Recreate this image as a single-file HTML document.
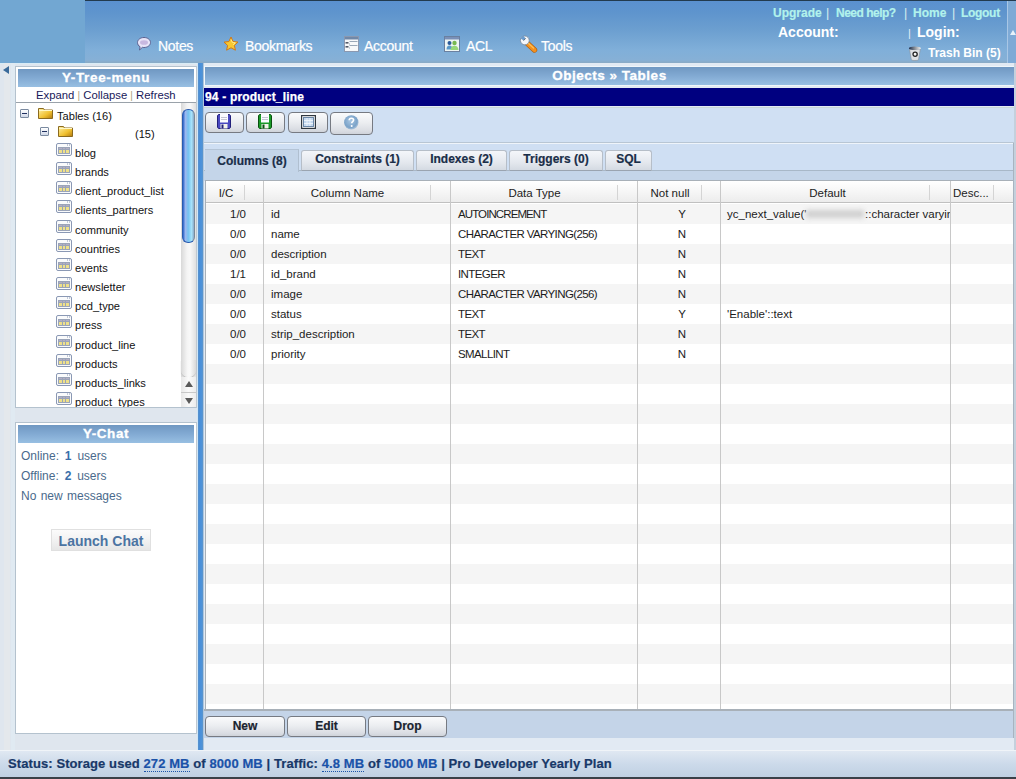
<!DOCTYPE html>
<html><head><meta charset="utf-8">
<style>
*{box-sizing:border-box}
html,body{margin:0;padding:0}
body{width:1016px;height:779px;overflow:hidden;position:relative;background:#dfe6ee;font-family:"Liberation Sans",sans-serif;}
.a{position:absolute}
.nw{white-space:nowrap}
/* header */
#hdr{left:0;top:0;width:1016px;height:63px;background:linear-gradient(#5a90cf 0px,#5e94cd 12px,#6c9fd0 30px,#80afd9 50px,#86b0d6 60px,#8aaac4 63px)}
#logo{left:0;top:0;width:85px;height:63px;background:#72a7d2}
#topline{left:85px;top:0;width:931px;height:1px;background:#223a4e}
#rstrip{left:1007px;top:1px;width:9px;height:62px;background:#7eaad6;border-left:1px solid #a9c7e6}
.nav{color:#fff;font-size:14px;top:38px;line-height:16px;letter-spacing:-.3px;-webkit-text-stroke:.2px #fff}
.hl{color:#b2f2ec;font-weight:bold;font-size:12px;top:7px;line-height:13px;-webkit-text-stroke:.2px #b2f2ec}
.hs{color:#d8f0f0;font-size:12.5px;top:6px;line-height:14px}
.tb{background:linear-gradient(#7098c2,#82aad3 50%,#98bfe2)}
.tt{color:#fff;font-weight:bold;text-align:center;-webkit-text-stroke:.3px #fff}
</style></head><body>

<!-- HEADER -->
<div id="hdr" class="a"></div>
<div id="logo" class="a"></div>
<div id="topline" class="a"></div>
<div id="rstrip" class="a"></div>
<div class="a" style="left:1010px;top:30px;width:0;height:0;border-left:3px solid transparent;border-right:3px solid transparent;border-bottom:5px solid #e6f2fa"></div>

<!-- nav icons + text -->
<svg class="a" style="left:136px;top:36px" width="16" height="16" viewBox="0 0 16 16">
 <path d="M8 1.5c3.6 0 6.5 2.2 6.5 5s-2.9 5-6.5 5c-.6 0-1.1 0-1.6-.2L3.5 14l.6-3.2C2.5 9.9 1.5 8.3 1.5 6.5c0-2.8 2.9-5 6.5-5z" fill="#e8e4f8" stroke="#5a6090" stroke-width="1"/>
 <ellipse cx="8" cy="6.5" rx="4" ry="2.3" fill="#c8b8e0"/>
</svg>
<div class="a nav nw" style="left:158px">Notes</div>
<svg class="a" style="left:223px;top:36px" width="16" height="16" viewBox="0 0 16 16">
 <path d="M8 1l2.1 4.5 4.9.6-3.6 3.3 1 4.8L8 11.8 3.6 14.2l1-4.8L1 6.1l4.9-.6z" fill="#f8c830" stroke="#d07818" stroke-width="1"/>
 <path d="M8 3.5l1.3 2.9 3 .4-2.2 2" fill="none" stroke="#fff4a0" stroke-width=".8"/>
</svg>
<div class="a nav nw" style="left:245px">Bookmarks</div>
<svg class="a" style="left:344px;top:36px" width="15" height="16" viewBox="0 0 15 16">
 <rect x=".5" y=".5" width="14" height="15" fill="#f6f8fa" stroke="#8a98b0"/>
 <rect x="1" y="1" width="13" height="2.5" fill="#7088a8"/>
 <rect x="1.5" y="6" width="3" height="1.6" fill="#505868"/><path d="M5.5 5.5h8M5.5 7.5v1" stroke="#9aa8b8" stroke-width="1"/>
 <rect x="1.5" y="10" width="3" height="1.6" fill="#505868"/><path d="M5.5 9.5h8M5.5 11.5v1" stroke="#9aa8b8" stroke-width="1"/>
</svg>
<div class="a nav nw" style="left:364px">Account</div>
<svg class="a" style="left:444px;top:36px" width="16" height="16" viewBox="0 0 16 16">
 <rect x=".5" y=".5" width="15" height="15" fill="#eef6f4" stroke="#6a80a0"/>
 <rect x="1" y="1" width="14" height="2.5" fill="#7a90b8"/>
 <circle cx="5.5" cy="7" r="2" fill="#2a5a9a"/><path d="M2.5 13.5c0-2.5 1.2-4 3-4s3 1.5 3 4z" fill="#5a98c8"/>
 <circle cx="10.5" cy="7" r="2.2" fill="#78b850"/><path d="M6.5 14c0-2.8 1.8-4.3 4-4.3s4 1.5 4 4.3z" fill="#98d878"/>
</svg>
<div class="a nav nw" style="left:466px">ACL</div>
<svg class="a" style="left:519px;top:34px" width="19" height="19" viewBox="0 0 19 19">
 <path d="M8.5 9.5l7 6.5" stroke="#b06010" stroke-width="5.4" stroke-linecap="round"/>
 <path d="M8.5 9.5l7 6.5" stroke="#f4901e" stroke-width="4.2" stroke-linecap="round"/>
 <path d="M9 9l5.5 5" stroke="#ffc050" stroke-width="1.3" stroke-linecap="round"/>
 <circle cx="5.8" cy="6.4" r="4.4" fill="#f4f6fa" stroke="#7a8696" stroke-width=".8"/>
 <path d="M1.6 4.6L4.6 6.6 6.6 4.4 4.4 1.8z" fill="#6a9ccf"/>
 <path d="M4.6 6.6L6.6 4.4" stroke="#5a6470" stroke-width=".9"/>
</svg>
<div class="a nav nw" style="left:541px">Tools</div>

<!-- top right links -->
<div class="a hl nw" style="left:773px">Upgrade</div>
<div class="a hs" style="left:826px">|</div>
<div class="a hl nw" style="left:836px;letter-spacing:-.5px">Need help?</div>
<div class="a hs" style="left:904px">|</div>
<div class="a hl nw" style="left:913px">Home</div>
<div class="a hs" style="left:952px">|</div>
<div class="a hl nw" style="left:961px;letter-spacing:-.3px">Logout</div>
<div class="a nw" style="left:778px;top:24px;color:#fff;font-weight:bold;font-size:14px;line-height:16px">Account:</div>
<div class="a" style="left:908px;top:27px;color:#e0f0f8;font-size:11px;line-height:12px">|</div>
<div class="a nw" style="left:917px;top:24px;color:#fff;font-weight:bold;font-size:14px;line-height:16px">Login:</div>
<svg class="a" style="left:908px;top:46px" width="14" height="15" viewBox="0 0 14 15">
 <defs><linearGradient id="trg" x1="0" x2="1"><stop offset="0" stop-color="#1a2a48"/><stop offset=".5" stop-color="#8a9098"/><stop offset="1" stop-color="#f4f4f4"/></linearGradient></defs>
 <path d="M1.5 3.2L3.3 13.6c.1.5 1.3.9 3.6.9s3.5-.4 3.6-.9L12.3 3.2z" fill="#dde0e4" stroke="#8a9098" stroke-width=".6"/>
 <ellipse cx="6.9" cy="2.3" rx="6" ry="1.8" fill="url(#trg)"/>
 <circle cx="7.1" cy="8.3" r="2.1" fill="#f4f4f4" stroke="#202020" stroke-width="1.3"/>
</svg>
<div class="a nw" style="left:928px;top:47px;color:#fff;font-weight:bold;font-size:12px;line-height:13px">Trash Bin (5)</div>



<!-- SIDEBAR -->
<div class="a" style="left:0;top:63px;width:1016px;height:1px;background:#d8ecf6"></div>
<div class="a" style="left:4px;top:63px;width:6px;height:688px;background:#e4e8ec"></div>
<div class="a" style="left:11px;top:63px;width:4px;height:688px;background:#e0eaf2"></div>
<div class="a" style="left:3px;top:66px;width:0;height:0;border-top:4px solid transparent;border-bottom:4px solid transparent;border-right:6px solid #3a6a9a"></div>
<div class="a" style="left:15px;top:66px;width:182px;height:342px;background:#fff;border:1px solid #b4c2ce;border-right-color:#c0c8d0"></div>
<div class="a tb" style="left:18px;top:69px;width:176px;height:18px"></div>
<div class="a tt nw" style="left:18px;top:71px;width:176px;font-size:13.5px;line-height:14px;letter-spacing:.65px">Y-Tree-menu</div>
<div class="a nw" style="left:36px;top:89px;font-size:11.3px;line-height:13px;color:#18185a">Expand <span style="color:#a8a07a;font-size:10px">|</span> Collapse <span style="color:#a8a07a;font-size:10px">|</span> Refresh</div>
<div class="a" style="left:16px;top:102px;width:180px;height:1px;background:#9aa2aa"></div>
<div class="a" style="left:181px;top:103px;width:15px;height:304px;background:linear-gradient(90deg,#d8d8d8,#f4f4f4 40%,#f8f8f8 60%,#e0e0e0)"></div>
<div class="a" style="left:182px;top:109px;width:13px;height:134px;border-radius:6px;background:linear-gradient(90deg,#2a62c8,#9cb8f0 22%,#74c2f0 48%,#a6e2fa 78%,#8aaac8);border:1px solid #2a5cb0;border-right-color:#7a8a9a"></div>
<div class="a" style="left:181px;top:360px;width:15px;height:17px;border-radius:0 0 7px 7px;background:linear-gradient(90deg,#d8d8d8,#f8f8f8 45%,#fafafa 60%,#d8d8d8);box-shadow:0 1px 1px #b8b8b8"></div>
<div class="a" style="left:181px;top:377px;width:15px;height:30px;background:linear-gradient(90deg,#e8e8e8,#fafafa 50%,#ececec)"></div>
<div class="a" style="left:185px;top:381px;width:0;height:0;border-left:4px solid transparent;border-right:4px solid transparent;border-bottom:6px solid #5a5a5a"></div>
<div class="a" style="left:181px;top:392px;width:15px;height:1px;background:#c8c8c8"></div>
<div class="a" style="left:185px;top:398px;width:0;height:0;border-left:4px solid transparent;border-right:4px solid transparent;border-top:6px solid #5a5a5a"></div>
<div class="a" style="left:16px;top:103px;width:165px;height:304px;overflow:hidden"><svg width="0" height="0" style="position:absolute"><defs><linearGradient id="fg" x1="0" y1="0" x2="1" y2="1"><stop offset="0" stop-color="#fff2a8"/><stop offset=".6" stop-color="#f0c030"/><stop offset="1" stop-color="#b07810"/></linearGradient></defs></svg><div class="a" style="left:4px;top:6px;width:9px;height:9px;border:1px solid #7a8aa0;background:linear-gradient(#fff,#d0d8e8);border-radius:1px"><div class="a" style="left:1px;top:3px;width:5px;height:1px;background:#203060"></div></div><svg class="a" style="left:22px;top:4px" width="15" height="12" viewBox="0 0 15 12"><path d="M.5 1.5h5l1 1.5h8v8.5H.5z" fill="url(#fg)" stroke="#8a6a20" stroke-width="1"/><path d="M1 3.5h13" stroke="#fff8c8" stroke-width="1"/></svg><div class="a nw" style="left:41px;top:7px;font-size:11.1px;line-height:13px;color:#111;">Tables (16)</div><div class="a" style="left:24px;top:24px;width:9px;height:9px;border:1px solid #7a8aa0;background:linear-gradient(#fff,#d0d8e8);border-radius:1px"><div class="a" style="left:1px;top:3px;width:5px;height:1px;background:#203060"></div></div><svg class="a" style="left:42px;top:22px" width="15" height="12" viewBox="0 0 15 12"><path d="M.5 1.5h5l1 1.5h8v8.5H.5z" fill="url(#fg)" stroke="#8a6a20" stroke-width="1"/><path d="M1 3.5h13" stroke="#fff8c8" stroke-width="1"/></svg><div class="a nw" style="left:119px;top:25px;font-size:11.1px;line-height:13px;color:#111;">(15)</div><svg class="a" style="left:40px;top:40px" width="16" height="13" viewBox="0 0 16 13"><rect x=".5" y=".5" width="15" height="12" rx="1.5" fill="#fafbfc" stroke="#8a98b4"/><path d="M11 2h1M13 2h1" stroke="#8a98b4" stroke-width="1"/><rect x="2" y="4" width="12" height="7" fill="#eee08a"/><rect x="2" y="4" width="12" height="2.5" fill="#b4aec4"/><path d="M2 4.5h12M2 6.5h12M2 10.5h12M2.5 4v7M6.5 4v7M9.5 4v7M13.5 4v7" stroke="#9aa4b8" stroke-width="1"/></svg><div class="a nw" style="left:59px;top:44px;font-size:11.1px;line-height:13px;color:#111;">blog</div><svg class="a" style="left:40px;top:59px" width="16" height="13" viewBox="0 0 16 13"><rect x=".5" y=".5" width="15" height="12" rx="1.5" fill="#fafbfc" stroke="#8a98b4"/><path d="M11 2h1M13 2h1" stroke="#8a98b4" stroke-width="1"/><rect x="2" y="4" width="12" height="7" fill="#eee08a"/><rect x="2" y="4" width="12" height="2.5" fill="#b4aec4"/><path d="M2 4.5h12M2 6.5h12M2 10.5h12M2.5 4v7M6.5 4v7M9.5 4v7M13.5 4v7" stroke="#9aa4b8" stroke-width="1"/></svg><div class="a nw" style="left:59px;top:63px;font-size:11.1px;line-height:13px;color:#111;">brands</div><svg class="a" style="left:40px;top:78px" width="16" height="13" viewBox="0 0 16 13"><rect x=".5" y=".5" width="15" height="12" rx="1.5" fill="#fafbfc" stroke="#8a98b4"/><path d="M11 2h1M13 2h1" stroke="#8a98b4" stroke-width="1"/><rect x="2" y="4" width="12" height="7" fill="#eee08a"/><rect x="2" y="4" width="12" height="2.5" fill="#b4aec4"/><path d="M2 4.5h12M2 6.5h12M2 10.5h12M2.5 4v7M6.5 4v7M9.5 4v7M13.5 4v7" stroke="#9aa4b8" stroke-width="1"/></svg><div class="a nw" style="left:59px;top:82px;font-size:11.1px;line-height:13px;color:#111;">client_product_list</div><svg class="a" style="left:40px;top:97px" width="16" height="13" viewBox="0 0 16 13"><rect x=".5" y=".5" width="15" height="12" rx="1.5" fill="#fafbfc" stroke="#8a98b4"/><path d="M11 2h1M13 2h1" stroke="#8a98b4" stroke-width="1"/><rect x="2" y="4" width="12" height="7" fill="#eee08a"/><rect x="2" y="4" width="12" height="2.5" fill="#b4aec4"/><path d="M2 4.5h12M2 6.5h12M2 10.5h12M2.5 4v7M6.5 4v7M9.5 4v7M13.5 4v7" stroke="#9aa4b8" stroke-width="1"/></svg><div class="a nw" style="left:59px;top:101px;font-size:11.1px;line-height:13px;color:#111;">clients_partners</div><svg class="a" style="left:40px;top:117px" width="16" height="13" viewBox="0 0 16 13"><rect x=".5" y=".5" width="15" height="12" rx="1.5" fill="#fafbfc" stroke="#8a98b4"/><path d="M11 2h1M13 2h1" stroke="#8a98b4" stroke-width="1"/><rect x="2" y="4" width="12" height="7" fill="#eee08a"/><rect x="2" y="4" width="12" height="2.5" fill="#b4aec4"/><path d="M2 4.5h12M2 6.5h12M2 10.5h12M2.5 4v7M6.5 4v7M9.5 4v7M13.5 4v7" stroke="#9aa4b8" stroke-width="1"/></svg><div class="a nw" style="left:59px;top:121px;font-size:11.1px;line-height:13px;color:#111;">community</div><svg class="a" style="left:40px;top:136px" width="16" height="13" viewBox="0 0 16 13"><rect x=".5" y=".5" width="15" height="12" rx="1.5" fill="#fafbfc" stroke="#8a98b4"/><path d="M11 2h1M13 2h1" stroke="#8a98b4" stroke-width="1"/><rect x="2" y="4" width="12" height="7" fill="#eee08a"/><rect x="2" y="4" width="12" height="2.5" fill="#b4aec4"/><path d="M2 4.5h12M2 6.5h12M2 10.5h12M2.5 4v7M6.5 4v7M9.5 4v7M13.5 4v7" stroke="#9aa4b8" stroke-width="1"/></svg><div class="a nw" style="left:59px;top:140px;font-size:11.1px;line-height:13px;color:#111;">countries</div><svg class="a" style="left:40px;top:155px" width="16" height="13" viewBox="0 0 16 13"><rect x=".5" y=".5" width="15" height="12" rx="1.5" fill="#fafbfc" stroke="#8a98b4"/><path d="M11 2h1M13 2h1" stroke="#8a98b4" stroke-width="1"/><rect x="2" y="4" width="12" height="7" fill="#eee08a"/><rect x="2" y="4" width="12" height="2.5" fill="#b4aec4"/><path d="M2 4.5h12M2 6.5h12M2 10.5h12M2.5 4v7M6.5 4v7M9.5 4v7M13.5 4v7" stroke="#9aa4b8" stroke-width="1"/></svg><div class="a nw" style="left:59px;top:159px;font-size:11.1px;line-height:13px;color:#111;">events</div><svg class="a" style="left:40px;top:174px" width="16" height="13" viewBox="0 0 16 13"><rect x=".5" y=".5" width="15" height="12" rx="1.5" fill="#fafbfc" stroke="#8a98b4"/><path d="M11 2h1M13 2h1" stroke="#8a98b4" stroke-width="1"/><rect x="2" y="4" width="12" height="7" fill="#eee08a"/><rect x="2" y="4" width="12" height="2.5" fill="#b4aec4"/><path d="M2 4.5h12M2 6.5h12M2 10.5h12M2.5 4v7M6.5 4v7M9.5 4v7M13.5 4v7" stroke="#9aa4b8" stroke-width="1"/></svg><div class="a nw" style="left:59px;top:178px;font-size:11.1px;line-height:13px;color:#111;">newsletter</div><svg class="a" style="left:40px;top:193px" width="16" height="13" viewBox="0 0 16 13"><rect x=".5" y=".5" width="15" height="12" rx="1.5" fill="#fafbfc" stroke="#8a98b4"/><path d="M11 2h1M13 2h1" stroke="#8a98b4" stroke-width="1"/><rect x="2" y="4" width="12" height="7" fill="#eee08a"/><rect x="2" y="4" width="12" height="2.5" fill="#b4aec4"/><path d="M2 4.5h12M2 6.5h12M2 10.5h12M2.5 4v7M6.5 4v7M9.5 4v7M13.5 4v7" stroke="#9aa4b8" stroke-width="1"/></svg><div class="a nw" style="left:59px;top:197px;font-size:11.1px;line-height:13px;color:#111;">pcd_type</div><svg class="a" style="left:40px;top:212px" width="16" height="13" viewBox="0 0 16 13"><rect x=".5" y=".5" width="15" height="12" rx="1.5" fill="#fafbfc" stroke="#8a98b4"/><path d="M11 2h1M13 2h1" stroke="#8a98b4" stroke-width="1"/><rect x="2" y="4" width="12" height="7" fill="#eee08a"/><rect x="2" y="4" width="12" height="2.5" fill="#b4aec4"/><path d="M2 4.5h12M2 6.5h12M2 10.5h12M2.5 4v7M6.5 4v7M9.5 4v7M13.5 4v7" stroke="#9aa4b8" stroke-width="1"/></svg><div class="a nw" style="left:59px;top:216px;font-size:11.1px;line-height:13px;color:#111;">press</div><svg class="a" style="left:40px;top:232px" width="16" height="13" viewBox="0 0 16 13"><rect x=".5" y=".5" width="15" height="12" rx="1.5" fill="#fafbfc" stroke="#8a98b4"/><path d="M11 2h1M13 2h1" stroke="#8a98b4" stroke-width="1"/><rect x="2" y="4" width="12" height="7" fill="#eee08a"/><rect x="2" y="4" width="12" height="2.5" fill="#b4aec4"/><path d="M2 4.5h12M2 6.5h12M2 10.5h12M2.5 4v7M6.5 4v7M9.5 4v7M13.5 4v7" stroke="#9aa4b8" stroke-width="1"/></svg><div class="a nw" style="left:59px;top:236px;font-size:11.1px;line-height:13px;color:#111;">product_line</div><svg class="a" style="left:40px;top:251px" width="16" height="13" viewBox="0 0 16 13"><rect x=".5" y=".5" width="15" height="12" rx="1.5" fill="#fafbfc" stroke="#8a98b4"/><path d="M11 2h1M13 2h1" stroke="#8a98b4" stroke-width="1"/><rect x="2" y="4" width="12" height="7" fill="#eee08a"/><rect x="2" y="4" width="12" height="2.5" fill="#b4aec4"/><path d="M2 4.5h12M2 6.5h12M2 10.5h12M2.5 4v7M6.5 4v7M9.5 4v7M13.5 4v7" stroke="#9aa4b8" stroke-width="1"/></svg><div class="a nw" style="left:59px;top:255px;font-size:11.1px;line-height:13px;color:#111;">products</div><svg class="a" style="left:40px;top:270px" width="16" height="13" viewBox="0 0 16 13"><rect x=".5" y=".5" width="15" height="12" rx="1.5" fill="#fafbfc" stroke="#8a98b4"/><path d="M11 2h1M13 2h1" stroke="#8a98b4" stroke-width="1"/><rect x="2" y="4" width="12" height="7" fill="#eee08a"/><rect x="2" y="4" width="12" height="2.5" fill="#b4aec4"/><path d="M2 4.5h12M2 6.5h12M2 10.5h12M2.5 4v7M6.5 4v7M9.5 4v7M13.5 4v7" stroke="#9aa4b8" stroke-width="1"/></svg><div class="a nw" style="left:59px;top:274px;font-size:11.1px;line-height:13px;color:#111;">products_links</div><svg class="a" style="left:40px;top:289px" width="16" height="13" viewBox="0 0 16 13"><rect x=".5" y=".5" width="15" height="12" rx="1.5" fill="#fafbfc" stroke="#8a98b4"/><path d="M11 2h1M13 2h1" stroke="#8a98b4" stroke-width="1"/><rect x="2" y="4" width="12" height="7" fill="#eee08a"/><rect x="2" y="4" width="12" height="2.5" fill="#b4aec4"/><path d="M2 4.5h12M2 6.5h12M2 10.5h12M2.5 4v7M6.5 4v7M9.5 4v7M13.5 4v7" stroke="#9aa4b8" stroke-width="1"/></svg><div class="a nw" style="left:59px;top:293px;font-size:11.1px;line-height:13px;color:#111;">product_types</div></div>
<div class="a" style="left:15px;top:422px;width:182px;height:312px;background:#fff;border:1px solid #b4c2ce;border-right-color:#c0c8d0"></div>
<div class="a tb" style="left:18px;top:425px;width:176px;height:18px"></div>
<div class="a tt nw" style="left:18px;top:427px;width:176px;font-size:13.5px;line-height:14px;letter-spacing:.55px">Y-Chat</div>
<div class="a nw" style="left:21px;top:449px;font-size:12px;line-height:14px;color:#4a6a8c;word-spacing:2.5px">Online: <b style="color:#3a6eaa">1</b> users</div>
<div class="a nw" style="left:21px;top:469px;font-size:12px;line-height:14px;color:#4a6a8c;word-spacing:2.5px">Offline: <b style="color:#3a6eaa">2</b> users</div>
<div class="a nw" style="left:21px;top:489px;font-size:12px;line-height:14px;color:#4a6a8c;word-spacing:1px">No new messages</div>
<div class="a" style="left:51px;top:529px;width:100px;height:22px;background:linear-gradient(#fbfbfb,#f0f0f0 60%,#e6e6e6);border:1px solid #e0e0e0"></div>
<div class="a nw" style="left:51px;top:533px;width:100px;text-align:center;font-size:14px;line-height:16px;font-weight:bold;color:#4b74a2">Launch Chat</div>
<div class="a" style="left:197px;top:63px;width:1px;height:687px;background:#d0e6f6"></div>
<div class="a" style="left:198px;top:63px;width:5px;height:687px;background:linear-gradient(90deg,#5a92cc,#4a8ed6 30%,#4a92dc 60%,#5a94cc)"></div>
<div class="a" style="left:203px;top:63px;width:1px;height:687px;background:#b0c6dc"></div>
<!-- MAIN -->
<div class="a" style="left:204px;top:63px;width:812px;height:687px;background:#e2eaf3"></div>
<div class="a" style="left:204px;top:66px;width:811px;height:20px;background:#f0f6fa"></div>
<div class="a tb" style="left:205px;top:67px;width:809px;height:18px"></div>
<div class="a tt nw" style="left:205px;top:69px;width:809px;font-size:13.5px;line-height:14px;letter-spacing:.5px">Objects &raquo; Tables</div>
<div class="a" style="left:204px;top:88px;width:811px;height:18px;background:#000080"></div>
<div class="a nw" style="left:205px;top:90px;font-size:12px;line-height:14px;font-weight:bold;color:#fff;letter-spacing:.18px;-webkit-text-stroke:.25px #fff">94 - product_line</div>
<div class="a" style="left:204px;top:107px;width:810px;height:36px;background:#d0e0f3;border-top:1px solid #c8d8d8;border-bottom:1px solid #b8c6d4"></div>
<div class="a" style="left:204px;top:143px;width:810px;height:1px;background:#eef4fa"></div>
<div class="a" style="left:205px;top:112px;width:39px;height:21px;border:1px solid #767a82;border-radius:4px;background:linear-gradient(#fafbfc,#eceef1 45%,#dadde3 85%,#cfd3da)"></div>
<div class="a" style="left:246px;top:112px;width:39px;height:21px;border:1px solid #767a82;border-radius:4px;background:linear-gradient(#fafbfc,#eceef1 45%,#dadde3 85%,#cfd3da)"></div>
<div class="a" style="left:288px;top:112px;width:40px;height:21px;border:1px solid #767a82;border-radius:4px;background:linear-gradient(#fafbfc,#eceef1 45%,#dadde3 85%,#cfd3da)"></div>
<div class="a" style="left:330px;top:112px;width:43px;height:23px;border:1px solid #767a82;border-radius:4px;background:linear-gradient(#fafbfc,#eceef1 45%,#dadde3 85%,#cfd3da)"></div>
<svg class="a" style="left:217px;top:114px" width="14" height="15" viewBox="0 0 14 15"><path d="M2 .5h10c.8 0 1.5.7 1.5 1.5v11c0 .8-.7 1.5-1.5 1.5H2c-.8 0-1.5-.7-1.5-1.5V2C.5 1.2 1.2.5 2 .5z" fill="#4a48c0" stroke="#22207a" stroke-width="1"/><rect x="3" y="0" width="8" height="8.5" fill="#fbfbff"/><path d="M4 3.5h6M4 5.5h6" stroke="#b8b8c8" stroke-width=".8"/><rect x="3.5" y="10" width="7" height="4.5" fill="#f2f2ea"/><rect x="4.5" y="10.5" width="2" height="4" fill="#22207a"/></svg>
<svg class="a" style="left:258px;top:114px" width="14" height="15" viewBox="0 0 14 15"><path d="M2 .5h10c.8 0 1.5.7 1.5 1.5v11c0 .8-.7 1.5-1.5 1.5H2c-.8 0-1.5-.7-1.5-1.5V2C.5 1.2 1.2.5 2 .5z" fill="#1a9a28" stroke="#0a5010" stroke-width="1"/><rect x="3" y="0" width="8" height="8.5" fill="#fbfbff"/><path d="M4 3.5h6M4 5.5h6" stroke="#b8b8c8" stroke-width=".8"/><rect x="3.5" y="10" width="7" height="4.5" fill="#f2f2ea"/><rect x="4.5" y="10.5" width="2" height="4" fill="#0a5010"/></svg>
<svg class="a" style="left:301px;top:115px" width="15" height="14" viewBox="0 0 15 14"><rect x=".6" y=".6" width="13.8" height="12.8" fill="#fff" stroke="#303840" stroke-width="1.2"/><rect x="2.5" y="2.5" width="10" height="9" fill="#c4d8ee" stroke="#6c88a8" stroke-width="1"/><path d="M3 5.5h9M3 8.5h9M6 3v8M9 3v8" stroke="#f0f6fc" stroke-width=".9"/></svg>
<svg class="a" style="left:343px;top:114px" width="17" height="17" viewBox="0 0 17 17"><defs><radialGradient id="hg" cx=".45" cy=".4" r=".65"><stop offset="0" stop-color="#a8c6e2"/><stop offset=".7" stop-color="#7aa2c8"/><stop offset="1" stop-color="#9cbad6" stop-opacity=".6"/></radialGradient></defs><circle cx="8.3" cy="8.4" r="7.2" fill="url(#hg)"/><path d="M6.2 6.3c0-1.3 1-2.1 2.2-2.1s2.2.8 2.2 1.9c0 1.4-1.9 1.5-1.9 3.1" fill="none" stroke="#fff" stroke-width="1.6"/><circle cx="8.7" cy="12" r="1" fill="#fff"/></svg>
<div class="a" style="left:204px;top:144px;width:810px;height:27px;background:#cfdff3"></div>
<div class="a" style="left:204px;top:170px;width:810px;height:1px;background:#a8b8c8"></div>
<div class="a" style="left:204px;top:171px;width:810px;height:10px;background:#c4d5e9"></div>
<div class="a" style="left:205px;top:149px;width:94px;height:23px;background:#c4d5e9;border-top:1px solid #b4c4d6;border-right:1px solid #b0bfd0"></div>
<div class="a nw" style="left:205px;top:154px;width:94px;text-align:center;font-size:12px;line-height:14px;font-weight:bold;color:#1a2e48;-webkit-text-stroke:.2px #1a2e48">Columns (8)</div>
<div class="a" style="left:301px;top:150px;width:113px;height:21px;border:1px solid #b6bec8;border-bottom-color:#9aa4b0;border-radius:3px 3px 0 0;background:linear-gradient(#f4f6fa,#e4e8ee 60%,#d4dae2)"></div>
<div class="a nw" style="left:301px;top:152px;width:113px;text-align:center;font-size:12px;line-height:14px;font-weight:bold;color:#1a2e48;-webkit-text-stroke:.2px #1a2e48">Constraints (1)</div>
<div class="a" style="left:416px;top:150px;width:91px;height:21px;border:1px solid #b6bec8;border-bottom-color:#9aa4b0;border-radius:3px 3px 0 0;background:linear-gradient(#f4f6fa,#e4e8ee 60%,#d4dae2)"></div>
<div class="a nw" style="left:416px;top:152px;width:91px;text-align:center;font-size:12px;line-height:14px;font-weight:bold;color:#1a2e48;-webkit-text-stroke:.2px #1a2e48">Indexes (2)</div>
<div class="a" style="left:509px;top:150px;width:94px;height:21px;border:1px solid #b6bec8;border-bottom-color:#9aa4b0;border-radius:3px 3px 0 0;background:linear-gradient(#f4f6fa,#e4e8ee 60%,#d4dae2)"></div>
<div class="a nw" style="left:509px;top:152px;width:94px;text-align:center;font-size:12px;line-height:14px;font-weight:bold;color:#1a2e48;-webkit-text-stroke:.2px #1a2e48">Triggers (0)</div>
<div class="a" style="left:605px;top:150px;width:47px;height:21px;border:1px solid #b6bec8;border-bottom-color:#9aa4b0;border-radius:3px 3px 0 0;background:linear-gradient(#f4f6fa,#e4e8ee 60%,#d4dae2)"></div>
<div class="a nw" style="left:605px;top:152px;width:47px;text-align:center;font-size:12px;line-height:14px;font-weight:bold;color:#1a2e48;-webkit-text-stroke:.2px #1a2e48">SQL</div>
<div class="a" style="left:205px;top:181px;width:809px;height:528px;background:#fff;border-left:1px solid #a8b0b8"></div>
<div class="a" style="left:205px;top:180px;width:809px;height:1px;background:#a8b0b8"></div>
<div class="a" style="left:206px;top:181px;width:808px;height:22px;background:linear-gradient(#ffffff,#f6f6f6 50%,#ececec);border-bottom:1px solid #c0c0c0"></div>
<div class="a" style="left:206px;top:204px;width:808px;height:20px;background:#f5f5f5"></div>
<div class="a" style="left:206px;top:224px;width:808px;height:20px;background:#ffffff"></div>
<div class="a" style="left:206px;top:244px;width:808px;height:20px;background:#f5f5f5"></div>
<div class="a" style="left:206px;top:264px;width:808px;height:20px;background:#ffffff"></div>
<div class="a" style="left:206px;top:284px;width:808px;height:20px;background:#f5f5f5"></div>
<div class="a" style="left:206px;top:304px;width:808px;height:20px;background:#ffffff"></div>
<div class="a" style="left:206px;top:324px;width:808px;height:20px;background:#f5f5f5"></div>
<div class="a" style="left:206px;top:344px;width:808px;height:20px;background:#ffffff"></div>
<div class="a" style="left:206px;top:364px;width:808px;height:20px;background:#f5f5f5"></div>
<div class="a" style="left:206px;top:384px;width:808px;height:20px;background:#ffffff"></div>
<div class="a" style="left:206px;top:404px;width:808px;height:20px;background:#f5f5f5"></div>
<div class="a" style="left:206px;top:424px;width:808px;height:20px;background:#ffffff"></div>
<div class="a" style="left:206px;top:444px;width:808px;height:20px;background:#f5f5f5"></div>
<div class="a" style="left:206px;top:464px;width:808px;height:20px;background:#ffffff"></div>
<div class="a" style="left:206px;top:484px;width:808px;height:20px;background:#f5f5f5"></div>
<div class="a" style="left:206px;top:504px;width:808px;height:20px;background:#ffffff"></div>
<div class="a" style="left:206px;top:524px;width:808px;height:20px;background:#f5f5f5"></div>
<div class="a" style="left:206px;top:544px;width:808px;height:20px;background:#ffffff"></div>
<div class="a" style="left:206px;top:564px;width:808px;height:20px;background:#f5f5f5"></div>
<div class="a" style="left:206px;top:584px;width:808px;height:20px;background:#ffffff"></div>
<div class="a" style="left:206px;top:604px;width:808px;height:20px;background:#f5f5f5"></div>
<div class="a" style="left:206px;top:624px;width:808px;height:20px;background:#ffffff"></div>
<div class="a" style="left:206px;top:644px;width:808px;height:20px;background:#f5f5f5"></div>
<div class="a" style="left:206px;top:664px;width:808px;height:20px;background:#ffffff"></div>
<div class="a" style="left:206px;top:684px;width:808px;height:20px;background:#f5f5f5"></div>
<div class="a" style="left:206px;top:704px;width:808px;height:5px;background:#ffffff"></div>
<div class="a" style="left:263px;top:181px;width:1px;height:528px;background:#c8c8c8"></div>
<div class="a" style="left:450px;top:181px;width:1px;height:528px;background:#c8c8c8"></div>
<div class="a" style="left:637px;top:181px;width:1px;height:528px;background:#c8c8c8"></div>
<div class="a" style="left:720px;top:181px;width:1px;height:528px;background:#c8c8c8"></div>
<div class="a" style="left:950px;top:181px;width:1px;height:528px;background:#c8c8c8"></div>
<div class="a" style="left:244px;top:185px;width:1px;height:15px;background:#d4d4d4"></div>
<div class="a" style="left:430px;top:185px;width:1px;height:15px;background:#d4d4d4"></div>
<div class="a" style="left:617px;top:185px;width:1px;height:15px;background:#d4d4d4"></div>
<div class="a" style="left:701px;top:185px;width:1px;height:15px;background:#d4d4d4"></div>
<div class="a" style="left:929px;top:185px;width:1px;height:15px;background:#d4d4d4"></div>
<div class="a" style="left:993px;top:185px;width:1px;height:15px;background:#d4d4d4"></div>
<div class="a nw" style="left:207px;top:187px;width:38px;text-align:center;font-size:11.5px;line-height:13px;color:#222">I/C</div>
<div class="a nw" style="left:264px;top:187px;width:167px;text-align:center;font-size:11.5px;line-height:13px;color:#222">Column Name</div>
<div class="a nw" style="left:451px;top:187px;width:167px;text-align:center;font-size:11.5px;line-height:13px;color:#222">Data Type</div>
<div class="a nw" style="left:638px;top:187px;width:64px;text-align:center;font-size:11.5px;line-height:13px;color:#222">Not null</div>
<div class="a nw" style="left:723px;top:187px;width:209px;text-align:center;font-size:11.5px;line-height:13px;color:#222">Default</div>
<div class="a nw" style="left:953px;top:187px;font-size:11.5px;line-height:13px;color:#222">Desc...</div>
<div class="a nw" style="left:206px;top:208px;width:40px;text-align:right;font-size:11.5px;line-height:13px;color:#1c1c1c">1/0</div>
<div class="a nw" style="left:271px;top:208px;font-size:11.5px;line-height:13px;color:#1c1c1c">id</div>
<div class="a nw" style="left:458px;top:208px;font-size:11.5px;line-height:13px;color:#1c1c1c;letter-spacing:-0.9px">AUTOINCREMENT</div>
<div class="a nw" style="left:640px;top:208px;width:84px;text-align:center;font-size:11.5px;line-height:13px;color:#1c1c1c">Y</div>
<div class="a nw" style="left:727px;top:208px;font-size:11.5px;line-height:13px;color:#1c1c1c">yc_next_value('</div>
<div class="a nw" style="left:206px;top:228px;width:40px;text-align:right;font-size:11.5px;line-height:13px;color:#1c1c1c">0/0</div>
<div class="a nw" style="left:271px;top:228px;font-size:11.5px;line-height:13px;color:#1c1c1c">name</div>
<div class="a nw" style="left:458px;top:228px;font-size:11.5px;line-height:13px;color:#1c1c1c;letter-spacing:-0.6px">CHARACTER VARYING(256)</div>
<div class="a nw" style="left:640px;top:228px;width:84px;text-align:center;font-size:11.5px;line-height:13px;color:#1c1c1c">N</div>
<div class="a nw" style="left:206px;top:248px;width:40px;text-align:right;font-size:11.5px;line-height:13px;color:#1c1c1c">0/0</div>
<div class="a nw" style="left:271px;top:248px;font-size:11.5px;line-height:13px;color:#1c1c1c">description</div>
<div class="a nw" style="left:458px;top:248px;font-size:11.5px;line-height:13px;color:#1c1c1c;letter-spacing:-0.6px">TEXT</div>
<div class="a nw" style="left:640px;top:248px;width:84px;text-align:center;font-size:11.5px;line-height:13px;color:#1c1c1c">N</div>
<div class="a nw" style="left:206px;top:268px;width:40px;text-align:right;font-size:11.5px;line-height:13px;color:#1c1c1c">1/1</div>
<div class="a nw" style="left:271px;top:268px;font-size:11.5px;line-height:13px;color:#1c1c1c">id_brand</div>
<div class="a nw" style="left:458px;top:268px;font-size:11.5px;line-height:13px;color:#1c1c1c;letter-spacing:-0.6px">INTEGER</div>
<div class="a nw" style="left:640px;top:268px;width:84px;text-align:center;font-size:11.5px;line-height:13px;color:#1c1c1c">N</div>
<div class="a nw" style="left:206px;top:288px;width:40px;text-align:right;font-size:11.5px;line-height:13px;color:#1c1c1c">0/0</div>
<div class="a nw" style="left:271px;top:288px;font-size:11.5px;line-height:13px;color:#1c1c1c">image</div>
<div class="a nw" style="left:458px;top:288px;font-size:11.5px;line-height:13px;color:#1c1c1c;letter-spacing:-0.6px">CHARACTER VARYING(256)</div>
<div class="a nw" style="left:640px;top:288px;width:84px;text-align:center;font-size:11.5px;line-height:13px;color:#1c1c1c">N</div>
<div class="a nw" style="left:206px;top:308px;width:40px;text-align:right;font-size:11.5px;line-height:13px;color:#1c1c1c">0/0</div>
<div class="a nw" style="left:271px;top:308px;font-size:11.5px;line-height:13px;color:#1c1c1c">status</div>
<div class="a nw" style="left:458px;top:308px;font-size:11.5px;line-height:13px;color:#1c1c1c;letter-spacing:-0.6px">TEXT</div>
<div class="a nw" style="left:640px;top:308px;width:84px;text-align:center;font-size:11.5px;line-height:13px;color:#1c1c1c">Y</div>
<div class="a nw" style="left:727px;top:308px;font-size:11.5px;line-height:13px;color:#1c1c1c">'Enable'::text</div>
<div class="a nw" style="left:206px;top:328px;width:40px;text-align:right;font-size:11.5px;line-height:13px;color:#1c1c1c">0/0</div>
<div class="a nw" style="left:271px;top:328px;font-size:11.5px;line-height:13px;color:#1c1c1c">strip_description</div>
<div class="a nw" style="left:458px;top:328px;font-size:11.5px;line-height:13px;color:#1c1c1c;letter-spacing:-0.6px">TEXT</div>
<div class="a nw" style="left:640px;top:328px;width:84px;text-align:center;font-size:11.5px;line-height:13px;color:#1c1c1c">N</div>
<div class="a nw" style="left:206px;top:348px;width:40px;text-align:right;font-size:11.5px;line-height:13px;color:#1c1c1c">0/0</div>
<div class="a nw" style="left:271px;top:348px;font-size:11.5px;line-height:13px;color:#1c1c1c">priority</div>
<div class="a nw" style="left:458px;top:348px;font-size:11.5px;line-height:13px;color:#1c1c1c;letter-spacing:-0.6px">SMALLINT</div>
<div class="a nw" style="left:640px;top:348px;width:84px;text-align:center;font-size:11.5px;line-height:13px;color:#1c1c1c">N</div>
<div class="a" style="left:806px;top:210px;width:58px;height:8px;background:#d0d0d0;filter:blur(2.5px)"></div>
<div class="a nw" style="left:865px;top:208px;width:85px;overflow:hidden;font-size:11.5px;line-height:13px;color:#1c1c1c">::character varying</div>
<div class="a" style="left:204px;top:709px;width:810px;height:2px;background:#a8b0b8"></div>
<div class="a" style="left:204px;top:711px;width:810px;height:27px;background:#c4d4e8"></div>
<div class="a" style="left:1014px;top:63px;width:2px;height:687px;background:#c4d0dc"></div>
<div class="a" style="left:1013px;top:143px;width:1px;height:595px;background:#a8b4c0"></div>
<div class="a" style="left:205px;top:716px;width:80px;height:21px;border:1px solid #767a82;border-radius:4px;background:linear-gradient(#fafbfc,#eceef1 45%,#dadde3 85%,#cfd3da)"></div>
<div class="a nw" style="left:205px;top:719px;width:80px;text-align:center;font-size:12px;line-height:14px;font-weight:bold;color:#1a2430;-webkit-text-stroke:.2px #1a2430">New</div>
<div class="a" style="left:287px;top:716px;width:79px;height:21px;border:1px solid #767a82;border-radius:4px;background:linear-gradient(#fafbfc,#eceef1 45%,#dadde3 85%,#cfd3da)"></div>
<div class="a nw" style="left:287px;top:719px;width:79px;text-align:center;font-size:12px;line-height:14px;font-weight:bold;color:#1a2430;-webkit-text-stroke:.2px #1a2430">Edit</div>
<div class="a" style="left:368px;top:716px;width:79px;height:21px;border:1px solid #767a82;border-radius:4px;background:linear-gradient(#fafbfc,#eceef1 45%,#dadde3 85%,#cfd3da)"></div>
<div class="a nw" style="left:368px;top:719px;width:79px;text-align:center;font-size:12px;line-height:14px;font-weight:bold;color:#1a2430;-webkit-text-stroke:.2px #1a2430">Drop</div>
<div class="a" style="left:0;top:750px;width:1016px;height:1px;background:#f0f4f8"></div>
<div class="a" style="left:0;top:751px;width:1016px;height:26px;background:linear-gradient(#e0e8f2,#ccdaea 50%,#c0d0e2)"></div>
<div class="a" style="left:0;top:777px;width:1016px;height:2px;background:#3a4048"></div>
<div class="a nw" style="left:8px;top:756px;font-size:13px;line-height:15px;font-weight:bold;color:#183868;letter-spacing:.09px;-webkit-text-stroke:.2px">Status: Storage used <span style="color:#1a52a8;border-bottom:1px dotted #1a52a8">272 MB</span> of <span style="color:#1a52a8">8000 MB</span> | Traffic: <span style="color:#1a52a8;border-bottom:1px dotted #1a52a8">4.8 MB</span> of <span style="color:#1a52a8">5000 MB</span> | Pro Developer Yearly Plan</div>
</body></html>
